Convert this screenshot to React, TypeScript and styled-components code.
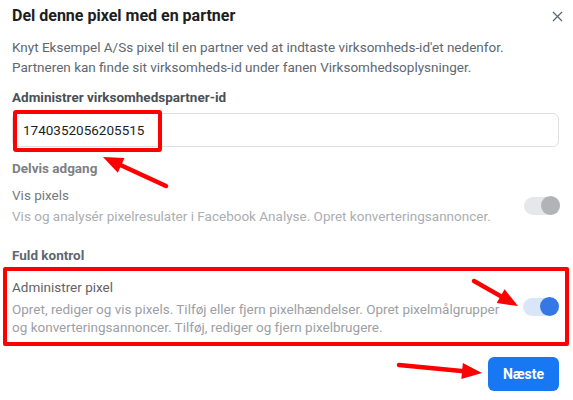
import React from "react";
import styled, { createGlobalStyle } from "styled-components";

const GlobalStyle = createGlobalStyle`
  body {
    margin: 0;
    background: #fff;
    font-family: Roboto, "Liberation Sans", Arial, sans-serif;
  }
`;

const Dialog = styled.div`
  position: relative;
  width: 573px;
  height: 400px;
  box-sizing: border-box;
  padding: 6px 0 0 0;
  overflow: hidden;
`;

const Header = styled.div`
  display: flex;
  align-items: center;
  justify-content: space-between;
  padding: 0 8px 0 12px;
  height: 20px;
`;

const Title = styled.h2`
  margin: 0;
  font-size: 16px;
  line-height: 20px;
  font-weight: 700;
  color: #1c1e21;
`;

const CloseButton = styled.button`
  display: flex;
  align-items: center;
  justify-content: center;
  width: 16px;
  height: 16px;
  padding: 0;
  margin-top: 0;
  border: none;
  background: none;
  color: #606770;
`;

const Body = styled.div`
  padding: 0 14px 0 12px;
`;

const Intro = styled.p`
  margin: 11px 0 0 0;
  font-size: 13.5px;
  line-height: 20px;
  color: #606770;
`;

const FieldLabel = styled.div`
  margin-top: 11px;
  font-size: 13.5px;
  line-height: 18px;
  font-weight: 700;
  color: #4b4f56;
`;

const InputWrap = styled.div`
  position: relative;
  margin-top: 7px;
`;

const Input = styled.input`
  box-sizing: border-box;
  width: 547px;
  height: 34px;
  padding: 0 10px;
  border: 1px solid #dddfe2;
  border-radius: 6px;
  font-family: inherit;
  font-size: 13.5px;
  color: #1c1e21;
  outline: none;
`;

const Highlight = styled.div`
  position: absolute;
  left: 1px;
  top: -3px;
  width: 149px;
  height: 42px;
  box-sizing: border-box;
  border: 4px solid #f00;
  border-radius: 3px;
  pointer-events: none;
`;

const SectionTitle = styled.div<{ $gap: number }>`
  margin-top: ${(p) => p.$gap}px;
  font-size: 13.5px;
  line-height: 18px;
  font-weight: 700;
  color: ${(p) => (p.$gap > 15 ? "#606770" : "#7d8086")};
`;

const PermissionRow = styled.div<{ $marked?: boolean }>`
  display: flex;
  align-items: center;
  justify-content: space-between;
  margin: ${(p) => (p.$marked ? "3px -10px 0 -9px" : "9px 0 0 0")};
  padding: ${(p) => (p.$marked ? "7px 6px 6px 5px" : "0 0 0 0")};
  border: ${(p) => (p.$marked ? "4px solid #f00" : "none")};
  border-radius: 2px;
`;

const PermissionText = styled.div`
  width: 500px;
`;

const PermissionName = styled.div<{ $active?: boolean }>`
  font-size: 13.5px;
  line-height: 18px;
  color: ${(p) => (p.$active ? "#5f6368" : "#75787d")};
`;

const PermissionDesc = styled.div<{ $active?: boolean }>`
  margin-top: ${(p) => (p.$active ? "4px" : "3px")};
  font-size: 13.5px;
  line-height: 18px;
  color: ${(p) => (p.$active ? "#9da0a4" : "#abaeb2")};
`;

const Toggle = styled.div<{ $on?: boolean }>`
  position: relative;
  flex: none;
  width: 36px;
  height: 18px;
  margin-right: ${(p) => (p.$on ? "0" : "-1px")};
  border-radius: 9px;
  background: ${(p) => (p.$on ? "#d9e6fa" : "#e6e7ea")};

  &::after {
    content: "";
    position: absolute;
    right: 0;
    top: -1px;
    width: 19px;
    height: 19px;
    border-radius: 50%;
    background: ${(p) => (p.$on ? "#3578e5" : "#b1b3b7")};
  }
`;

const Footer = styled.div`
  display: flex;
  justify-content: flex-end;
  margin-top: 11px;
`;

const PrimaryButton = styled.button`
  width: 71px;
  height: 34px;
  border: none;
  border-radius: 6px;
  background: #1877f2;
  color: #fff;
  font-family: inherit;
  font-size: 14px;
  font-weight: 700;
`;

const Annotations = styled.svg`
  position: absolute;
  left: 0;
  top: 0;
  pointer-events: none;
`;

function Arrow({ x1, y1, x2, y2 }: { x1: number; y1: number; x2: number; y2: number }) {
  const dx = x2 - x1;
  const dy = y2 - y1;
  const len = Math.hypot(dx, dy);
  const ux = dx / len;
  const uy = dy / len;
  const headLen = 20;
  const half = 8;
  const bx = x2 - ux * headLen;
  const by = y2 - uy * headLen;
  const pts = [
    `${x2},${y2}`,
    `${bx - uy * half},${by + ux * half}`,
    `${bx + uy * half},${by - ux * half}`,
  ].join(" ");
  return (
    <g>
      <line x1={x1} y1={y1} x2={bx + ux * 2} y2={by + uy * 2} stroke="#f00" strokeWidth={4.5} strokeLinecap="round" />
      <polygon points={pts} fill="#f00" />
    </g>
  );
}

export default function App() {
  return (
    <>
      <GlobalStyle />
      <Dialog>
        <Header>
          <Title>Del denne pixel med en partner</Title>
          <CloseButton aria-label="Luk">
            <svg width="11" height="11" viewBox="0 0 11 11">
              <path d="M1 1L10 10M10 1L1 10" stroke="#606770" strokeWidth="1.3" />
            </svg>
          </CloseButton>
        </Header>
        <Body>
          <Intro>
            Knyt Eksempel A/Ss pixel til en partner ved at indtaste virksomheds-id'et nedenfor.
            <br />
            Partneren kan finde sit virksomheds-id under fanen Virksomhedsoplysninger.
          </Intro>
          <FieldLabel>Administrer virksomhedspartner-id</FieldLabel>
          <InputWrap>
            <Input defaultValue="1740352056205515" />
            <Highlight />
          </InputWrap>
          <SectionTitle $gap={12}>Delvis adgang</SectionTitle>
          <PermissionRow>
            <PermissionText>
              <PermissionName>Vis pixels</PermissionName>
              <PermissionDesc>
                Vis og analysér pixelresulater i Facebook Analyse. Opret konverteringsannoncer.
              </PermissionDesc>
            </PermissionText>
            <Toggle />
          </PermissionRow>
          <SectionTitle $gap={21}>Fuld kontrol</SectionTitle>
          <PermissionRow $marked>
            <PermissionText>
              <PermissionName $active>Administrer pixel</PermissionName>
              <PermissionDesc $active>
                Opret, rediger og vis pixels. Tilføj eller fjern pixelhændelser. Opret pixelmålgrupper og
                konverteringsannoncer. Tilføj, rediger og fjern pixelbrugere.
              </PermissionDesc>
            </PermissionText>
            <Toggle $on />
          </PermissionRow>
          <Footer>
            <PrimaryButton>Næste</PrimaryButton>
          </Footer>
        </Body>
        <Annotations width="573" height="400">
          <Arrow x1={166} y1={186} x2={103} y2={157} />
          <Arrow x1={474} y1={281} x2={518} y2={306} />
          <Arrow x1={399} y1={365} x2={482} y2={373} />
        </Annotations>
      </Dialog>
    </>
  );
}
